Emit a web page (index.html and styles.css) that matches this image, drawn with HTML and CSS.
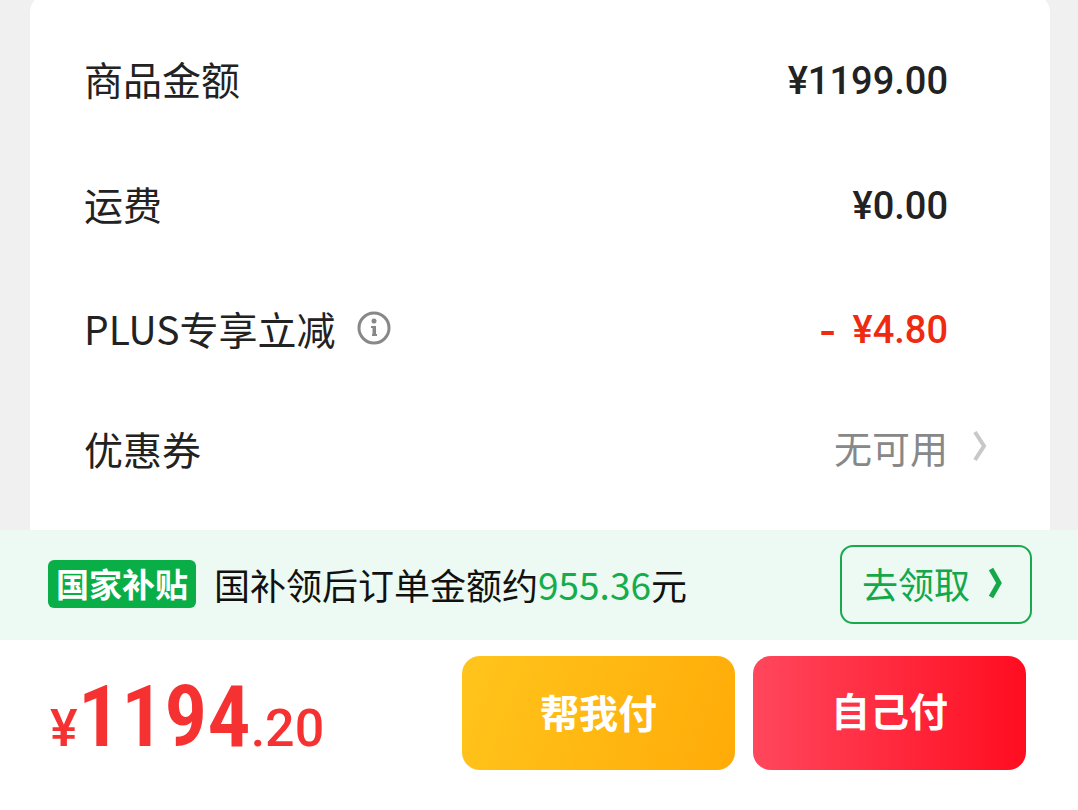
FILE: index.html
```html
<!DOCTYPE html>
<html lang="zh-CN">
<head>
    <meta charset="UTF-8">
    <meta name="viewport" content="width=device-width, initial-scale=1.0">
    <title>确认订单</title>
    <link rel="stylesheet" href="styles.css">
</head>
<body>
    <main class="content">
        <dl class="card">
            <div class="row">
                <dt>商品金额</dt>
                <dd class="price">¥1199.00</dd>
            </div>
            <div class="row">
                <dt>运费</dt>
                <dd class="price">¥0.00</dd>
            </div>
            <div class="row">
                <dt>
                    PLUS专享立减
                    <button class="info" type="button" aria-label="说明">
                        <svg width="36" height="36" viewBox="0 0 36 36" fill="none" stroke="currentColor">
                            <circle cx="18" cy="18" r="15" stroke-width="3"/>
                            <circle cx="18" cy="11" r="2.5" fill="currentColor" stroke="none"/>
                            <path d="M15 17h4v8M16 25h5" stroke-width="2"/>
                            <path d="M18 16v9" stroke-width="3"/>
                        </svg>
                    </button>
                </dt>
                <dd class="price discount"><span class="minus">-</span><span>¥4.80</span></dd>
            </div>
            <div class="row coupon">
                <dt>优惠券</dt>
                <dd>
                    <a class="coupon-link" href="#">
                        无可用
                        <svg width="16" height="32" viewBox="0 0 16 32" fill="none" stroke="currentColor" stroke-width="4">
                            <path d="M3 2l9 14-9 14"/>
                        </svg>
                    </a>
                </dd>
            </div>
        </dl>
    </main>

    <section class="subsidy">
        <span class="badge">国家补贴</span>
        <p class="subsidy-text">国补领后订单金额约<span class="amount">955.36</span>元</p>
        <button class="claim" type="button">
            去领取
            <svg width="16" height="32" viewBox="0 0 16 32" fill="none" stroke="currentColor" stroke-width="5">
                <path d="M3 2l8 14-8 14"/>
            </svg>
        </button>
    </section>

    <footer class="pay-bar">
        <div class="total"><span>¥</span><span class="integer">1194</span><span>.20</span></div>
        <div class="buttons">
            <button class="pay friend" type="button">帮我付</button>
            <button class="pay self" type="button">自己付</button>
        </div>
    </footer>
</body>
</html>
```
FILE: styles.css
```css
* {
    box-sizing: border-box;
}
body {
    margin: 0;
    min-height: 100vh;
    display: flex;
    flex-direction: column;
    background: #fafafa;
    color: #222;
    font-family: "Noto Sans CJK SC", sans-serif;
    font-size: 39px;
}
button {
    font-family: inherit;
    cursor: pointer;
}
.content {
    overflow: hidden;
    padding: 0 28px 0 30px;
    background: #f0f0f0;
}
.card {
    margin: -6px 0 0;
    padding: 24px 62px 23px 54px;
    border-radius: 18px;
    border-bottom-left-radius: 0;
    border-bottom-right-radius: 0;
    background: #fff;
}
.row {
    display: flex;
    align-items: center;
    justify-content: space-between;
    height: 125px;
}
.row dt {
    display: flex;
    align-items: center;
    padding-bottom: 5px;
}
.row dd {
    margin: 0;
}
.row .price {
    padding-right: 40px;
    font-family: Roboto, sans-serif;
    font-size: 38px;
    font-weight: 500;
}
.discount {
    display: flex;
    gap: 16px;
    color: #ee2a10;
}
.minus {
    font-family: Inter, sans-serif;
    font-weight: 600;
}
.info {
    display: flex;
    margin-left: 20px;
    padding: 0;
    border: none;
    background: none;
    color: #888;
}
.coupon {
    height: 114px;
}
.coupon-link {
    display: flex;
    align-items: center;
    gap: 24px;
    padding-bottom: 8px;
    font-size: 38px;
    color: #888;
    text-decoration: none;
}
.coupon-link svg {
    color: #c8c8c8;
}

.subsidy {
    display: flex;
    align-items: center;
    height: 110px;
    padding: 0 46px 2px 48px;
    background: #edf9f3;
}
.badge {
    padding: 0 8px 2px;
    border-radius: 6px;
    background: #0aae46;
    color: #fff;
    font-size: 33px;
    font-weight: bold;
    line-height: 46px;
}
.subsidy-text {
    flex: 1;
    margin: 0 0 0 18px;
    color: #111;
    font-size: 36px;
}
.amount {
    color: #14ad4c;
    font-size: 37px;
}
.claim {
    display: flex;
    align-items: center;
    gap: 18px;
    height: 79px;
    padding: 0 26px 2px 20px;
    border: 2px solid #1aa84f;
    border-radius: 13px;
    background: none;
    color: #14a84a;
    font-size: 36px;
}

.pay-bar {
    display: flex;
    align-items: flex-start;
    justify-content: space-between;
    padding: 16px 52px 36px 50px;
    background: #fff;
}
.total {
    padding-top: 16px;
    color: #f53231;
    font-family: Roboto, sans-serif;
    font-size: 52px;
    font-weight: 500;
    line-height: 90px;
    white-space: nowrap;
}
.integer {
    font-family: "Roboto Condensed", Roboto, sans-serif;
    font-size: 86px;
    font-weight: 600;
}
.buttons {
    display: flex;
    gap: 18px;
}
.pay {
    width: 273px;
    height: 114px;
    padding: 0 0 4px;
    border: none;
    border-radius: 18px;
    color: #fff;
    font-size: 39px;
    font-weight: bold;
}
.friend {
    background: linear-gradient(110deg, #ffc51c, #ffab08);
}
.self {
    padding-bottom: 8px;
    background: linear-gradient(90deg, #ff475d, #ff0d20);
}
```
